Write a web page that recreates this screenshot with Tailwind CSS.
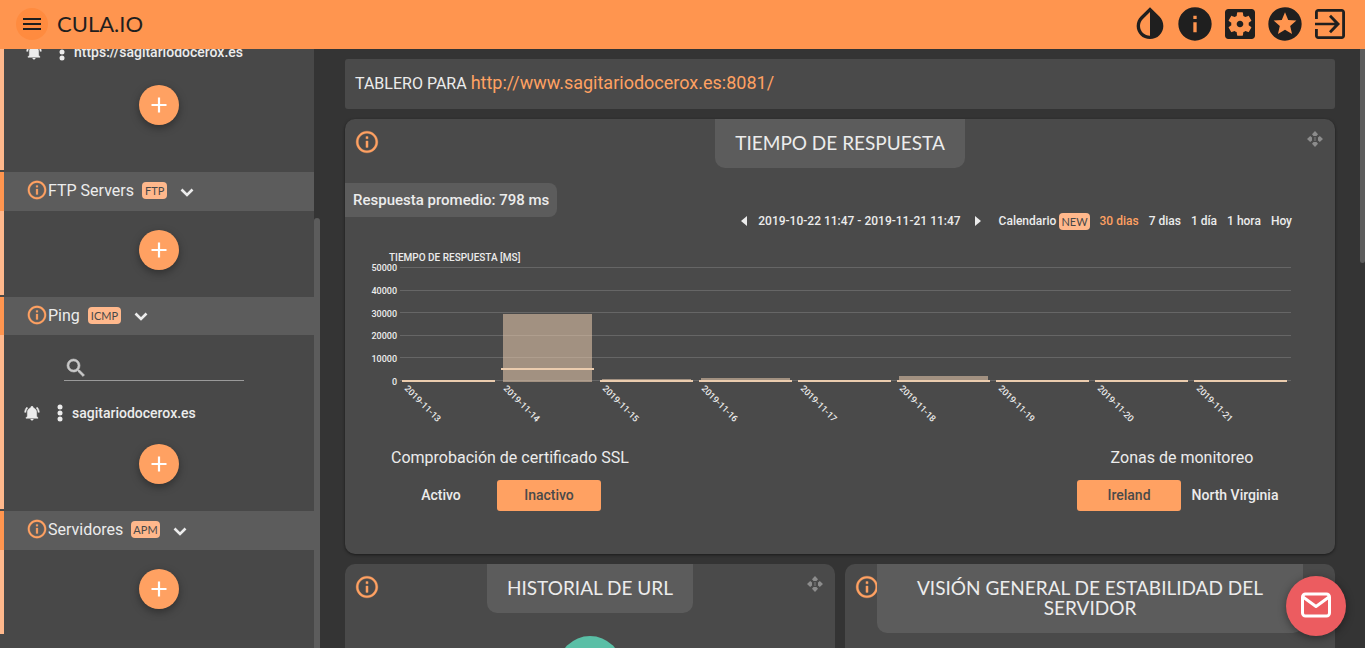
<!DOCTYPE html>
<html lang="es">
<head>
<meta charset="utf-8">
<meta name="viewport" content="width=device-width, initial-scale=1">
<title>CULA.IO</title>
<script src="https://cdn.jsdelivr.net/npm/@tailwindcss/browser@4"></script>
</head>
<body class="flex h-screen flex-col overflow-hidden bg-[#343434] font-['Roboto',sans-serif] text-[#ececec]">

<svg class="hidden" aria-hidden="true">
  <symbol id="info" viewBox="0 0 24 24"><path d="M11 7h2v2h-2zm0 4h2v6h-2zm1-9C6.48 2 2 6.48 2 12s4.48 10 10 10 10-4.480 10-10S17.52 2 12 2zm0 18c-4.410 0-8-3.590-8-8s3.590-8 8-8 8 3.590 8 8-3.590 8-8 8z" stroke="currentColor" stroke-width=".3"/></symbol>
  <symbol id="plus" viewBox="0 0 24 24"><path d="M19.500 13.100h-6.400v6.400h-2.200v-6.400H4.500v-2.200h6.400V4.500h2.200v6.400h6.400z"/></symbol>
  <symbol id="chevron" viewBox="0 0 14 9"><path d="M1.500 1.500 7 7l5.500-5.500" fill="none" stroke="currentColor" stroke-width="2.600"/></symbol>
  <symbol id="dots" viewBox="0 0 6 18"><circle cx="3" cy="3" r="2.500"/><circle cx="3" cy="9" r="2.500"/><circle cx="3" cy="15" r="2.500"/></symbol>
  <symbol id="bell" viewBox="0 0 24 24"><path d="M21 19v1H3v-1l2-2v-6c0-3.100 2.030-5.830 5-6.710V4a2 2 0 0 1 4 0v.29c2.970.880 5 3.610 5 6.710v6l2 2m-7 2a2 2 0 0 1-4 0m9.750-17.810-1.420 1.420C20.040 6.300 21 8.600 21 11h2c0-2.930-1.160-5.750-3.250-7.810M1 11h2c0-2.400.96-4.700 2.670-6.390L4.250 3.190C2.160 5.250 1 8.070 1 11z" stroke="currentColor" stroke-width=".7"/></symbol>
  <symbol id="move" viewBox="0 0 16 16"><path d="M8 0 11 3.200 9.500 5h-3L5 3.200zM8 16l3-3.200L9.500 11h-3L5 12.800zM0 8l3.200-3L5 6.500v3L3.200 11zM16 8l-3.200-3L11 6.500v3l1.800 1.500z"/><path d="M7.200 6h1.600v4H7.200z" opacity=".5"/></symbol>
</svg>

<header class="flex h-[49px] shrink-0 items-center bg-[#ff954f] px-[15px] pb-px text-[#1f1f1f]">
  <button aria-label="Menú" class="ml-px flex size-8 items-center justify-center rounded-full bg-[#ff8b3f]">
    <svg class="size-6" viewBox="0 0 24 24" fill="currentColor"><path d="M3 18h18v-2H3v2zm0-5h18v-2H3v2zm0-7v2h18V6H3z"/></svg>
  </button>
  <a href="#" class="ml-[9px] font-['Lato',sans-serif] text-[22px] leading-6">CULA.IO</a>
  <nav class="ml-auto flex gap-[5px]">
    <button aria-label="Tema"><svg class="size-10" viewBox="0 0 24 24" fill="currentColor"><path d="M12 4.810V19c-3.310 0-6-2.630-6-5.870 0-1.560.62-3.030 1.750-4.140zM6.350 7.560C4.900 8.990 4 10.960 4 13.130 4 17.480 7.580 21 12 21s8-3.520 8-7.870c0-2.170-.9-4.140-2.350-5.570L12 2z" fill-rule="evenodd"/></svg></button>
    <button aria-label="Información"><svg class="size-10" viewBox="0 0 24 24" fill="currentColor"><path d="M12 2C6.480 2 2 6.480 2 12s4.480 10 10 10 10-4.480 10-10S17.520 2 12 2zm1 15h-2v-6h2v6zm0-8h-2V7h2v2z"/></svg></button>
    <button aria-label="Ajustes"><svg class="size-10" viewBox="0 0 24 24" fill="currentColor"><path d="M12 10c-1.100 0-2 .9-2 2s.9 2 2 2 2-.9 2-2-.9-2-2-2zm7-7H5c-1.110 0-2 .9-2 2v14c0 1.100.89 2 2 2h14c1.110 0 2-.9 2-2V5c0-1.100-.89-2-2-2zm-1.750 9c0 .23-.02.46-.05.68l1.480 1.160c.13.110.170.3.080.450l-1.400 2.420c-.09.150-.27.210-.43.150l-1.740-.7c-.36.280-.76.510-1.180.690l-.26 1.850c-.03.170-.18.3-.35.3h-2.800c-.17 0-.32-.13-.35-.29l-.26-1.850c-.43-.18-.82-.41-1.180-.69l-1.740.7c-.16.06-.34 0-.43-.15l-1.400-2.420c-.09-.15-.05-.34.080-.45l1.480-1.160c-.03-.23-.05-.46-.05-.69 0-.23.02-.46.05-.68l-1.480-1.160c-.13-.11-.17-.3-.08-.45l1.400-2.420c.09-.15.27-.21.430-.15l1.740.7c.36-.28.76-.51 1.180-.69l.26-1.850c.03-.17.18-.3.350-.3h2.800c.17 0 .32.13.350.29l.26 1.850c.43.18.82.41 1.180.69l1.740-.7c.16-.06.34 0 .430.15l1.400 2.420c.09.15.05.34-.08.450l-1.480 1.160c.03.230.05.460.05.690z"/></svg></button>
    <button aria-label="Favoritos"><svg class="size-10" viewBox="0 0 24 24" fill="currentColor"><path d="M11.990 2C6.470 2 2 6.480 2 12s4.470 10 9.990 10C17.520 22 22 17.520 22 12S17.520 2 11.990 2zm4.240 16L12 15.450 7.770 18l1.120-4.810-3.730-3.230 4.920-.42L12 5l1.920 4.530 4.920.42-3.730 3.230L16.230 18z"/></svg></button>
    <button aria-label="Salir"><svg class="size-10" viewBox="0 0 24 24" fill="currentColor"><path d="M11.400 16.300l1.200 1.200L18 12l-5.400-5.500-1.200 1.200 3.400 3.500H3v1.600h11.800zM19 3H5c-1.110 0-2 .9-2 2v4h1.700V4.700h14.600v14.600H4.700V15H3v4c0 1.100.89 2 2 2h14c1.100 0 2-.9 2-2V5c0-1.100-.9-2-2-2z"/></svg></button>
  </nav>
</header>

<div class="flex min-h-0 flex-1">
  <aside class="flex w-80 shrink-0">
    <div class="flex min-w-0 flex-1 flex-col gap-[2px] overflow-hidden bg-[#484848]">
      <section class="flex shrink-0 flex-col border-l-4 border-[#ffb88c] pb-[45px]">
        <div class="-mt-[9px] flex h-6 items-center pl-[22px] text-sm font-medium">
          <svg class="size-4" fill="currentColor"><use href="#bell"/></svg>
          <button aria-label="Opciones" class="ml-[17px]"><svg class="h-[18px] w-[6px]" fill="currentColor"><use href="#dots"/></svg></button>
          <a href="#" class="ml-[9px]">https://sagitariodocerox.es</a>
        </div>
        <button aria-label="Añadir" class="mt-[21px] flex size-10 items-center justify-center self-center rounded-full bg-[#ffa162] text-white shadow-[0_3px_8px_rgba(0,0,0,0.35)]"><svg class="size-6" fill="currentColor"><use href="#plus"/></svg></button>
      </section>

      <section class="shrink-0">
        <h2 class="flex h-[39px] items-center border-l-4 border-[#ff954f] bg-[#5c5c5c] pb-[2px] pl-[22px]">
          <svg class="-mt-[2px] size-[22px] text-[#ffa162]" fill="currentColor"><use href="#info"/></svg>
          <span>FTP Servers</span>
          <span class="ml-2 rounded bg-[#ffb88c] px-[3px] font-['Lato',sans-serif] text-[11px] leading-[17px] text-[#484848]">FTP</span>
          <button aria-label="Plegar FTP Servers" class="ml-[13px]"><svg class="mt-1 h-[9px] w-[14px]"><use href="#chevron"/></svg></button>
        </h2>
        <div class="flex flex-col border-l-4 border-[#ffb88c] pb-[25px] pt-[19px]">
          <button aria-label="Añadir" class="flex size-10 items-center justify-center self-center rounded-full bg-[#ffa162] text-white shadow-[0_3px_8px_rgba(0,0,0,0.35)]"><svg class="size-6" fill="currentColor"><use href="#plus"/></svg></button>
        </div>
      </section>

      <section class="shrink-0">
        <h2 class="flex h-[38px] items-center border-l-4 border-[#ff954f] bg-[#5c5c5c] pb-px pl-[22px]">
          <svg class="-mt-[2px] size-[22px] text-[#ffa162]" fill="currentColor"><use href="#info"/></svg>
          <span>Ping</span>
          <span class="ml-2 rounded bg-[#ffb88c] px-[3px] font-['Lato',sans-serif] text-[11px] leading-[17px] text-[#484848]">ICMP</span>
          <button aria-label="Plegar Ping" class="ml-[13px]"><svg class="mt-[2px] h-[9px] w-[14px]"><use href="#chevron"/></svg></button>
        </h2>
        <div class="flex flex-col border-l-4 border-[#ffb88c] pb-[25px] pt-5">
          <label class="ml-[60px] flex h-[26px] w-[180px] items-center border-b border-[#9a9a9a] text-[#c8c8c8]">
            <svg class="size-6" viewBox="0 0 24 24" fill="currentColor"><path d="M15.500 14h-.79l-.28-.27A6.470 6.470 0 0 0 16 9.500 6.500 6.500 0 1 0 9.500 16c1.610 0 3.090-.59 4.230-1.570l.27.28v.79l5 4.990L20.490 19l-4.990-5zm-6 0C7.010 14 5 11.990 5 9.500S7.010 5 9.500 5 14 7.010 14 9.500 11.990 14 9.500 14z" stroke="currentColor" stroke-width=".6"/></svg>
            <input type="search" aria-label="Buscar" class="min-w-0 flex-1 bg-transparent text-sm outline-none">
          </label>
          <div class="mt-5 flex h-6 items-center pl-5 text-sm font-medium">
            <svg class="size-4" fill="currentColor"><use href="#bell"/></svg>
            <button aria-label="Opciones" class="ml-[17px]"><svg class="h-[18px] w-[6px]" fill="currentColor"><use href="#dots"/></svg></button>
            <a href="#" class="ml-[9px]">sagitariodocerox.es</a>
          </div>
          <button aria-label="Añadir" class="mt-[19px] flex size-10 items-center justify-center self-center rounded-full bg-[#ffa162] text-white shadow-[0_3px_8px_rgba(0,0,0,0.35)]"><svg class="size-6" fill="currentColor"><use href="#plus"/></svg></button>
        </div>
      </section>

      <section class="shrink-0">
        <h2 class="flex h-[39px] items-center border-l-4 border-[#ff954f] bg-[#5c5c5c] pb-[2px] pl-[22px]">
          <svg class="-mt-[2px] size-[22px] text-[#ffa162]" fill="currentColor"><use href="#info"/></svg>
          <span>Servidores</span>
          <span class="ml-2 rounded bg-[#ffb88c] px-[2px] font-['Lato',sans-serif] text-[11px] leading-[17px] text-[#484848]">APM</span>
          <button aria-label="Plegar Servidores" class="ml-[13px]"><svg class="mt-1 h-[9px] w-[14px]"><use href="#chevron"/></svg></button>
        </h2>
        <div class="flex flex-col border-l-4 border-[#ffb88c] pb-[25px] pt-[19px]">
          <button aria-label="Añadir" class="flex size-10 items-center justify-center self-center rounded-full bg-[#ffa162] text-white shadow-[0_3px_8px_rgba(0,0,0,0.35)]"><svg class="size-6" fill="currentColor"><use href="#plus"/></svg></button>
        </div>
      </section>
    </div>
    <div class="w-[6px] pt-[169px]"><div class="h-full rounded-t bg-[#5c5c5c]"></div></div>
  </aside>

  <main class="flex min-w-0 flex-1 flex-col gap-[10px] overflow-hidden px-[25px] pt-[10px]">
    <h1 class="shrink-0 rounded-[3px] bg-[#4a4a4a] px-[10px] pb-[14px] pt-3 text-base leading-6"><span class="flex h-6 items-baseline gap-1">TABLERO PARA <a href="#" class="text-lg leading-6 text-[#ffa162]">http://www.sagitariodocerox.es:8081/</a></span></h1>

    <section class="shrink-0 rounded-[10px] bg-[#4a4a4a] pb-[43px] shadow-[0_1px_3px_rgba(0,0,0,0.5)]">
      <div class="grid grid-cols-[1fr_auto_1fr] items-start">
        <button aria-label="Ayuda" class="ml-[9px] mt-[10px] justify-self-start text-[#ffa162]"><svg class="size-[26px]" fill="currentColor"><use href="#info"/></svg></button>
        <h2 class="min-w-[250px] rounded-b-[10px] bg-[#5c5c5c] px-[18px] pb-[15px] pt-[14px] text-center font-['Lato',sans-serif] text-[19px] leading-5">TIEMPO DE RESPUESTA</h2>
        <button aria-label="Mover" class="mr-3 mt-3 justify-self-end text-[#8c8c8c]"><svg class="size-4" fill="currentColor"><use href="#move"/></svg></button>
      </div>
      <p class="mt-[15px] w-fit rounded-r-lg bg-[#5c5c5c] px-2 text-[15px] font-medium leading-[34px]">Respuesta promedio: 798 ms</p>

      <div class="-mt-[6px] flex h-5 items-center justify-end gap-[10px] pr-[43px] text-xs font-medium">
        <button aria-label="Anterior" class="mr-px"><svg class="h-[10px] w-[6px]" viewBox="0 0 6 10" fill="currentColor"><path d="M6 0v10L0 5z"/></svg></button>
        <span>2019-10-22 11:47 - 2019-11-21 11:47</span>
        <button aria-label="Siguiente" class="ml-1 mr-2"><svg class="h-[10px] w-[6px]" viewBox="0 0 6 10" fill="currentColor"><path d="M0 0v10l6-5z"/></svg></button>
        <button class="flex items-center gap-[3px]">Calendario <span class="rounded bg-[#ffb88c] px-[2px] font-['Lato',sans-serif] text-[11px] font-normal leading-[17px] text-[#484848]">NEW</span></button>
        <button class="text-[#ffa162]">30 dias</button>
        <button>7 dias</button>
        <button>1 día</button>
        <button>1 hora</button>
        <button>Hoy</button>
      </div>

      <figure class="mt-[22px] pr-11 text-[10px] font-medium leading-[10px]">
        <figcaption class="pl-11">TIEMPO DE RESPUESTA [MS]</figcaption>
        <div class="flex gap-[3px]">
          <div class="flex h-[124px] w-[52px] shrink-0 flex-col justify-between text-right text-[9px]"><span>50000</span><span>40000</span><span>30000</span><span>20000</span><span>10000</span><span>0</span></div>
          <div class="min-w-0 flex-1 pt-1">
            <div class="relative h-[115px]">
              <div class="flex h-[114px] flex-col justify-between">
                <div class="h-px bg-[#666]"></div><div class="h-px bg-[#666]"></div><div class="h-px bg-[#666]"></div><div class="h-px bg-[#666]"></div><div class="h-px bg-[#666]"></div><div class="h-px bg-[#666]"></div>
              </div>
              <div id="bars" class="absolute inset-0 flex"></div>
            </div>
            <div id="days" class="flex h-[66px] text-[9px]"></div>
          </div>
        </div>
      </figure>

      <div class="flex justify-between pl-11 pr-12">
        <div>
          <h3 class="pl-[2px] text-base leading-5">Comprobación de certificado SSL</h3>
          <div class="mt-3 flex gap-1 text-sm font-medium leading-[31px]">
            <button class="w-[104px]">Activo</button>
            <button class="w-[104px] rounded-[3px] bg-[#ffa162] text-[#4a4a4a]">Inactivo</button>
          </div>
        </div>
        <div>
          <h3 class="text-center text-base leading-5">Zonas de monitoreo</h3>
          <div class="mt-3 flex gap-[2px] text-sm font-medium leading-[31px]">
            <button class="w-[104px] rounded-[3px] bg-[#ffa162] text-[#4a4a4a]">Ireland</button>
            <button class="w-[104px]">North Virginia</button>
          </div>
        </div>
      </div>
    </section>

    <div class="grid flex-1 grid-cols-2 gap-[10px]">
      <section class="rounded-t-[10px] bg-[#4a4a4a]">
        <div class="grid grid-cols-[1fr_auto_1fr] items-start">
          <button aria-label="Ayuda" class="ml-[9px] mt-[10px] justify-self-start text-[#ffa162]"><svg class="size-[26px]" fill="currentColor"><use href="#info"/></svg></button>
          <h2 class="min-w-[206px] rounded-b-[10px] bg-[#5c5c5c] px-[18px] pb-[15px] pt-[14px] text-center font-['Lato',sans-serif] text-[19px] leading-5">HISTORIAL DE URL</h2>
          <button aria-label="Mover" class="mr-3 mt-3 justify-self-end text-[#8c8c8c]"><svg class="size-4" fill="currentColor"><use href="#move"/></svg></button>
        </div>
        <div class="mx-auto mt-[23px] size-16 rounded-full bg-[#5abfa6]"></div>
      </section>
      <section class="rounded-t-[10px] bg-[#4a4a4a]">
        <div class="flex items-start">
          <button aria-label="Ayuda" class="ml-[9px] mt-[10px] w-[23px] shrink-0 text-[#ffa162]"><svg class="size-[26px]" fill="currentColor"><use href="#info"/></svg></button>
          <h2 class="mr-8 flex-1 rounded-b-[10px] bg-[#5c5c5c] px-[18px] pb-[15px] pt-[14px] text-center font-['Lato',sans-serif] text-[19px] leading-5">VISIÓN GENERAL DE ESTABILIDAD DEL SERVIDOR</h2>
        </div>
      </section>
    </div>
  </main>
  <div class="w-[5px] shrink-0"><div class="h-[214px] rounded-b bg-[#5c5c5c]"></div></div>
</div>

<button aria-label="Contacto" class="fixed bottom-3 right-[19px] flex size-[60px] items-center justify-center rounded-full bg-[#ec5c60] pb-[2px] text-white shadow-[0_2px_8px_rgba(0,0,0,0.4)]">
  <svg class="h-[26px] w-8" viewBox="0 0 32 26" fill="none" stroke="currentColor" stroke-width="3" stroke-linejoin="round"><rect x="2.500" y="2" width="27" height="22" rx="3"/><path d="M3 5l13 9.500L29 5"/></svg>
</button>

<script>
  // Heights in pixels: max is the translucent bar, avg the offset of the bright line.
  const data = [
    ['2019-11-13', 1, 0], ['2019-11-14', 68, 12], ['2019-11-15', 3, 0],
    ['2019-11-16', 4, 0], ['2019-11-17', 1, 0], ['2019-11-18', 6, 0],
    ['2019-11-19', 1, 0], ['2019-11-20', 1, 0], ['2019-11-21', 1, 0],
  ];
  document.getElementById('bars').innerHTML = data.map(([, max, avg]) =>
    `<div class="relative flex flex-1 items-end pl-1 pr-[6px]">
      <div class="w-full bg-[#ebccae]/55" style="height:${max}px"></div>
      <div class="absolute left-[2px] right-1 h-[2px] bg-[#ebccae]" style="bottom:${avg}px"></div>
    </div>`).join('');
  document.getElementById('days').innerHTML = data.map(([day]) =>
    `<div class="min-w-0 flex-1 pl-[6px]"><span class="block w-fit origin-left rotate-45 whitespace-nowrap">${day}</span></div>`).join('');
</script>
</body>
</html>
